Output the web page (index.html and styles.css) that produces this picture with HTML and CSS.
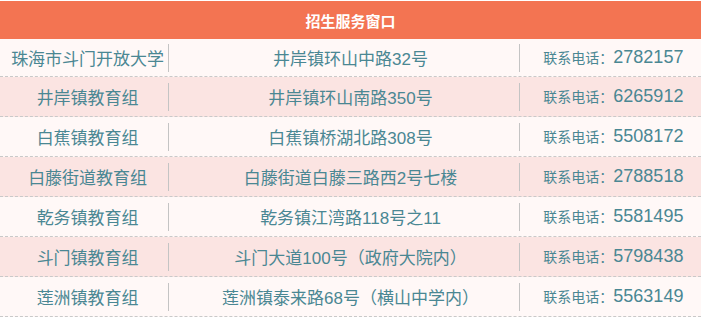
FILE: index.html
```html
<!DOCTYPE html>
<html lang="zh-CN">
<head>
<meta charset="utf-8">
<title>招生服务窗口</title>
<link rel="stylesheet" href="styles.css">
</head>
<body>
<div class="panel">
  <div class="panel-head">招生服务窗口</div>
  <div class="rows">
    <div class="row">
      <div class="cell name">珠海市斗门开放大学</div>
      <div class="cell addr">井岸镇环山中路32号</div>
      <div class="cell tel"><p class="phone"><span class="label">联系电话：</span><span class="num">2782157</span></p></div>
    </div>
    <div class="row">
      <div class="cell name">井岸镇教育组</div>
      <div class="cell addr">井岸镇环山南路350号</div>
      <div class="cell tel"><p class="phone"><span class="label">联系电话：</span><span class="num">6265912</span></p></div>
    </div>
    <div class="row">
      <div class="cell name">白蕉镇教育组</div>
      <div class="cell addr">白蕉镇桥湖北路308号</div>
      <div class="cell tel"><p class="phone"><span class="label">联系电话：</span><span class="num">5508172</span></p></div>
    </div>
    <div class="row">
      <div class="cell name">白藤街道教育组</div>
      <div class="cell addr">白藤街道白藤三路西2号七楼</div>
      <div class="cell tel"><p class="phone"><span class="label">联系电话：</span><span class="num">2788518</span></p></div>
    </div>
    <div class="row">
      <div class="cell name">乾务镇教育组</div>
      <div class="cell addr">乾务镇江湾路118号之11</div>
      <div class="cell tel"><p class="phone"><span class="label">联系电话：</span><span class="num">5581495</span></p></div>
    </div>
    <div class="row">
      <div class="cell name">斗门镇教育组</div>
      <div class="cell addr">斗门大道100号（政府大院内）</div>
      <div class="cell tel"><p class="phone"><span class="label">联系电话：</span><span class="num">5798438</span></p></div>
    </div>
    <div class="row">
      <div class="cell name">莲洲镇教育组</div>
      <div class="cell addr">莲洲镇泰来路68号（横山中学内）</div>
      <div class="cell tel"><p class="phone"><span class="label">联系电话：</span><span class="num">5563149</span></p></div>
    </div>
  </div>
</div>
</body>
</html>
```

FILE: styles.css
```css
html, body {
  margin: 0;
  padding: 0;
  background: #ffffff;
}

body {
  padding-top: 1px;
  font-family: "Liberation Sans", "Noto Sans CJK SC", sans-serif;
  color: #4a8793;
}

.panel {
  width: 701px;
}

.panel-head {
  height: 38px;
  background: #f37452;
  color: #ffffff;
  font-size: 15px;
  font-weight: bold;
  display: flex;
  align-items: center;
  justify-content: center;
}

.rows {
  display: flex;
  flex-direction: column;
}

.row {
  display: grid;
  grid-template-columns: 1fr 2fr 1fr;
  height: 39px;
  border-bottom: 1px dashed #c9c9c9;
  background: #fff8f7;
}

.row:first-child {
  height: 37px;
}

.row:nth-child(even) {
  background: #fbe4e2;
}

.cell {
  position: relative;
  display: flex;
  align-items: center;
  justify-content: center;
  font-size: 17px;
  white-space: nowrap;
}

.cell.name::after,
.cell.addr::after {
  content: "";
  position: absolute;
  right: 6px;
  top: 50%;
  height: 28px;
  margin-top: -14px;
  border-right: 1px solid #c4c4c4;
}

.phone {
  margin: 0;
  line-height: 24px;
}

.label {
  font-size: 14px;
}

.num {
  font-size: 18px;
}
```
